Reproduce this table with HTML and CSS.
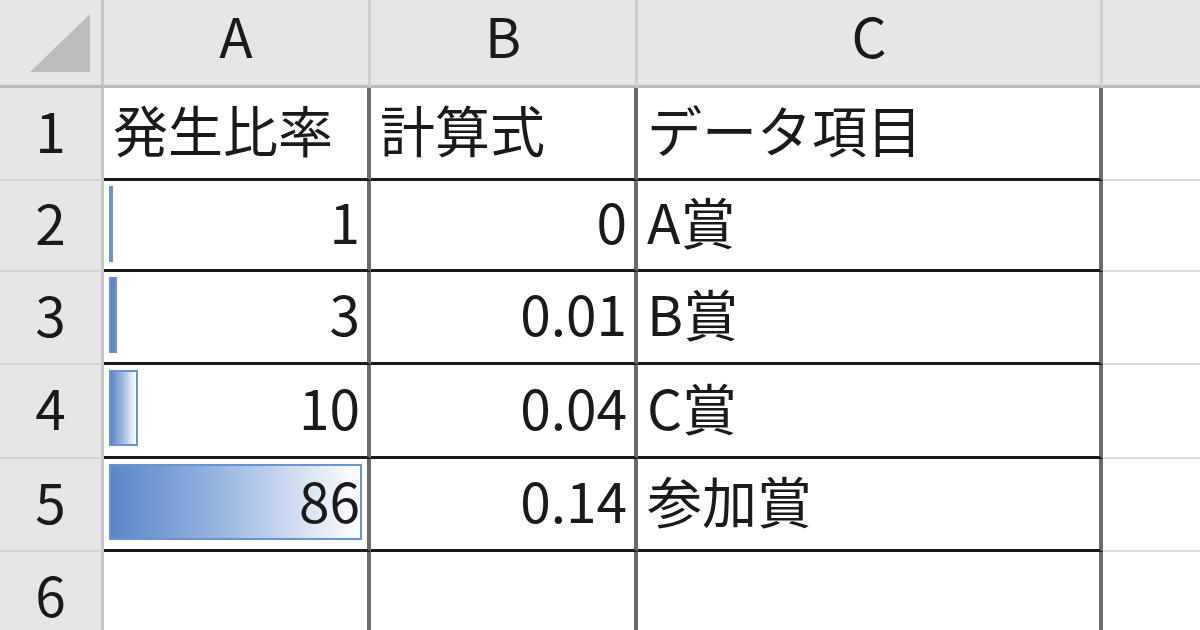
FILE: index.html
```html
<!DOCTYPE html>
<html lang="ja">
<head>
<meta charset="utf-8">
<title>Sheet</title>
<link rel="stylesheet" href="styles.css">
</head>
<body>
<div class="sheet">
  <div class="corner">
    <svg class="corner-tri" width="104" height="88" viewBox="0 0 104 88"><polygon points="30,72 90,72 90,14" fill="#bdbdbd"/></svg>
  </div>
  <div class="colhead">A</div>
  <div class="colhead">B</div>
  <div class="colhead">C</div>
  <div class="colhead colhead-last"></div>

  <div class="rowhead">1</div>
  <div class="cell txt">発生比率</div>
  <div class="cell txt">計算式</div>
  <div class="cell txt">データ項目</div>
  <div class="cell-d"></div>

  <div class="rowhead">2</div>
  <div class="cell num"><span class="bar" style="width:4px"></span><span class="val">1</span></div>
  <div class="cell num"><span class="val">0</span></div>
  <div class="cell txt">A賞</div>
  <div class="cell-d"></div>

  <div class="rowhead">3</div>
  <div class="cell num"><span class="bar bar-solid" style="width:8px"></span><span class="val">3</span></div>
  <div class="cell num"><span class="val">0.01</span></div>
  <div class="cell txt">B賞</div>
  <div class="cell-d"></div>

  <div class="rowhead">4</div>
  <div class="cell num"><span class="bar" style="width:29px"></span><span class="val">10</span></div>
  <div class="cell num"><span class="val">0.04</span></div>
  <div class="cell txt">C賞</div>
  <div class="cell-d"></div>

  <div class="rowhead">5</div>
  <div class="cell num"><span class="bar" style="width:253px"></span><span class="val">86</span></div>
  <div class="cell num"><span class="val">0.14</span></div>
  <div class="cell txt">参加賞</div>
  <div class="cell-d"></div>

  <div class="rowhead rowhead-last">6</div>
  <div class="cell cell-last"></div>
  <div class="cell cell-last"></div>
  <div class="cell cell-last"></div>
  <div class="cell-d cell-d-last"></div>
</div>
</body>
</html>
```
FILE: styles.css
```css
html, body {
  margin: 0;
  padding: 0;
  background: #ffffff;
}
body {
  width: 1200px;
  height: 630px;
  overflow: hidden;
  font-family: "Noto Sans CJK JP", "Noto Sans", sans-serif;
  font-size: 55px;
  line-height: 1;
  color: #1a1a1a;
}
.sheet {
  display: grid;
  grid-template-columns: 104px 267px 267px 465px 97px;
  grid-template-rows: 88px 93px 91px 93px 94px 93px 78px;
}
.corner {
  background: #e6e6e6;
  border-right: 3px solid #c4c4c4;
  border-bottom: 3px solid #b9b9b9;
  box-sizing: border-box;
  position: relative;
}
.corner-tri {
  position: absolute;
  left: 0;
  top: 0;
}
.colhead {
  background: #e6e6e6;
  border-right: 3px solid #cfcfcf;
  border-bottom: 3px solid #b9b9b9;
  box-sizing: border-box;
  display: flex;
  align-items: center;
  justify-content: center;
  padding-bottom: 16px;
}
.colhead-last {
  border-right: none;
}
.rowhead {
  background: #e6e6e6;
  border-right: 3px solid #c4c4c4;
  border-bottom: 2px solid #d2d2d2;
  box-sizing: border-box;
  display: flex;
  align-items: center;
  justify-content: center;
  padding-bottom: 9px;
}
.rowhead-last {
  border-bottom: none;
  padding-bottom: 0;
  align-items: flex-start;
  padding-top: 14px;
}
.cell {
  position: relative;
  box-sizing: border-box;
  border-right: 4px solid #6a6a6a;
  border-bottom: 3px solid #1a1a1a;
  display: flex;
  align-items: center;
  padding-bottom: 9px;
}
.cell-last {
  border-bottom: none;
}
.txt {
  justify-content: flex-start;
  padding-left: 9px;
}
.num {
  justify-content: flex-end;
  padding-right: 7px;
}
.val {
  position: relative;
}
.bar {
  position: absolute;
  left: 5px;
  top: 5px;
  height: 76px;
  box-sizing: border-box;
  border: 2px solid #6b93d0;
  background: linear-gradient(to right, #5a87c8 0%, #9bb7e2 45%, #ffffff 100%);
}
.bar-solid {
  background: #5a87c8;
}
.cell-d {
  box-sizing: border-box;
  border-bottom: 2px solid #dadada;
}
.cell-d-last {
  border-bottom: none;
}
```
